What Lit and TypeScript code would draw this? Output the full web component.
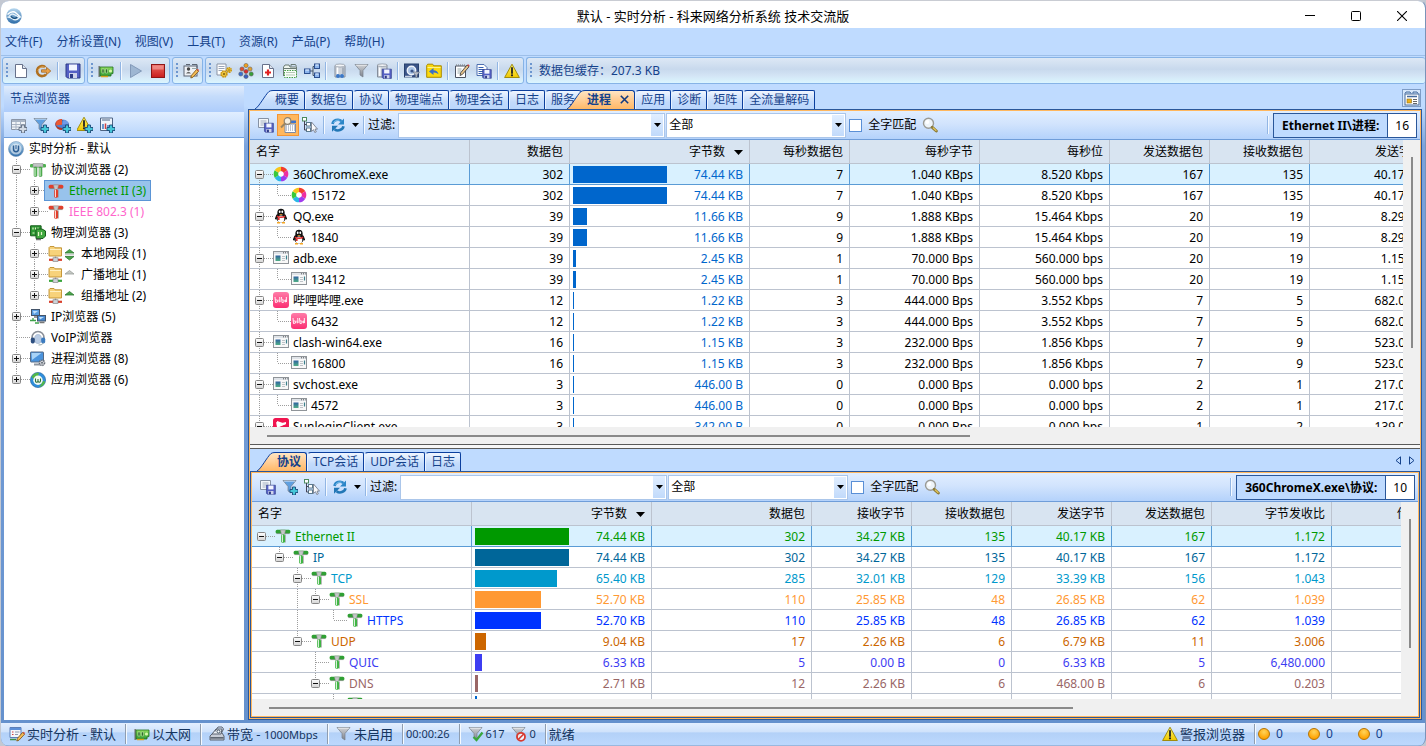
import { LitElement, html, svg, css, nothing } from "lit";
import { customElement, state } from "lit/decorators.js";
import { classMap } from "lit/directives/class-map.js";

const pipe = (arm: string, stem: string) => svg`
  <rect x=".6" y="1.800" width="14.800" height="3.600" rx="1.500" fill=${arm} />
  <path d="M1.500 5.600h13" stroke="#6d756d" stroke-width=".6" />
  <path d="M5.500 2h5l-1 4.500h-3z" fill="#c4c7c7" stroke="#8b8f8f" stroke-width=".5" />
  <rect x="6.200" y="6.200" width="3.800" height="8.600" rx="1.500" fill=${stem} />
  <path d="M7.500 6.600v7.500" stroke="#fff" stroke-opacity=".8" stroke-width="1" />
  <path d="M10.500 6.500v8" stroke="#999" stroke-width=".7" />`;

const funnel = (fill: string) => svg`
  <path d="M1 1.500h13l-5 6v6.500l-3-2V7.500z" fill=${fill} stroke="#777f8a" stroke-width=".7" />
  <path d="M2 2.200h11" stroke="#fff" stroke-opacity=".6" />`;

const plus = svg`<path d="M10.500 8h3v2.500H16v3h-2.500V16h-3v-2.500H8v-3h2.500z" fill="#46c7d8" stroke="#184a78" stroke-width=".9" />`;
const floppy = (x: number, y: number, s: number) => svg`
  <g transform=${`translate(${x} ${y}) scale(${s})`}>
    <path d="M1 1h14v14H2.500L1 13.500z" fill="#5560c4" stroke="#2c3a86" />
    <rect x="4" y="1.500" width="8" height="6" fill="#f2f5ff" />
    <rect x="4" y="10" width="8" height="5" fill="#cfd4ea" /><rect x="5" y="11" width="3" height="4" fill="#2c3a86" />
  </g>`;
const warn = svg`
  <path d="M8 1.200 15.400 14.500H.6z" fill="url(#g-yellow)" stroke="#9a8500" stroke-width=".9" stroke-linejoin="round" />
  <path d="M8 5v5" stroke="#222" stroke-width="1.800" stroke-linecap="round" /><circle cx="8" cy="12.300" r="1.100" fill="#222" />`;
const nic = svg`
  <path d="M1.200 3v11" stroke="#777" stroke-width="1.500" />
  <path d="M2 4h13v6.500l-2 .5v2H2z" fill="url(#g-green)" stroke="#1e6e1e" stroke-width=".8" />
  <path d="M4 6h2v4H4zM7.500 6h2v4h-2z" fill="#2b6a2b" stroke="#c8efae" stroke-width=".5" /><circle cx="12.500" cy="8" r="1.600" fill="#d6f7a8" />
  <path d="M3 13.500h7" stroke="#d6a520" stroke-width="1.500" />`;
const pencil = svg`
  <path d="M13.500 6.500 15.500 8.300 10 14.200 7.800 15 8.300 12.500z" fill="#f3bd57" stroke="#7a4e12" stroke-width=".8" />
  <path d="M13.500 6.500l2 1.800 .6-1.200-1.400-1.300z" fill="#d8574a" />`;
const page = svg`<path d="M2.500 1.500h7l4 4v9h-11z" fill="#fff" stroke="#67718a" /><path d="M9.500 1.500v4h4" fill="#dfe5ee" stroke="#67718a" />`;
const netFolder = (net: string) => svg`
  <path d="M1 1.500l1-1h4l1 1.300h6.500V10H1z" fill="#f7d27a" stroke="#c08f2c" stroke-width=".9" />
  <path d="M2 3.500h11" stroke="#fff0c0" />
  <path d="M7.500 10.500v2" stroke="#999" stroke-width="1.500" />
  <path d="M1 13.800h13" stroke=${net} stroke-width="2.200" /><rect x="5" y="11.800" width="5" height="3.500" fill="#cfd2d8" stroke="#777" stroke-width=".6" />`;
const appWindow = svg`
  <rect x=".5" y="1.500" width="15" height="12" fill="#f8f8f8" stroke="#8f9499" />
  <path d="M1 2h14v2H1z" fill="#dfe3e8" /><path d="M10 2.800h1m1 0h1m1 0h.7" stroke="#555" />
  <rect x="2.500" y="5.500" width="5" height="5.500" fill="url(#g-app)" />
  <path d="M9 6.500h3M9 8.500h3M9 10.500h3" stroke="#bfc4c9" /><path d="M13.500 5.500v4" stroke="#3b7f8b" stroke-width="1.200" />`;

const ICONS: Record<string, unknown> = {
  logo: svg`<circle cx="8" cy="8" r="7.700" fill="url(#g-logo)" />
    <path d="M1.500 6.500q5-4.500 8.500-1.500t4.500 4.500" fill="none" stroke="#fff" stroke-width="1.500" />
    <path d="M3 8.500q2.500-4 6-1.500t4.500 1.700M14 9q-4 4.500-7.500 1.800T1.500 9.500" fill="none" stroke="#e8f3fb" stroke-width="1.300" />
    <path d="M5 8.500q3.500 3.500 6 .5" fill="none" stroke="#1b4f7d" stroke-width="1.200" />`,
  newdoc: page,
  open: svg`<path d="M10.300 4.300A5 5 0 1 0 11 11.200" fill="none" stroke="#b0701f" stroke-width="2.600" /><path d="M10 4.500A4.700 4.700 0 0 0 3 8" fill="none" stroke="#e3b169" stroke-width="1" />
    <path d="M6.500 6.800h5V4.300l4.300 3.700-4.300 3.700V9.200h-5z" fill="#e9a24a" stroke="#9c5d14" stroke-width=".7" />`,
  save: floppy(0, 0, 1),
  nic,
  play: svg`<path d="M2.500 1.500 13.500 8 2.500 14.500z" fill="#9eb6d2" stroke="#8299b8" />`,
  stop: svg`<rect x="1.500" y="1.500" width="13" height="13" fill="url(#g-red)" stroke="#8e1616" /><path d="M2.500 2.500h11v4h-11z" fill="#f5a5a0" fill-opacity=".6" />`,
  profile: svg`<rect x="1" y="3" width="13" height="10" fill="#eef1f5" stroke="#5d6572" /><path d="M3 1.500h4M9 1.500h5v4" stroke="#5d6572" fill="none" />
    <circle cx="5.500" cy="6" r="1.700" fill="#444" /><path d="M3 10.500q2.500-3.500 5 0z" fill="#666" /><path d="M9 5.500h4" stroke="#9aa" />${pencil}`,
  gears: svg`<path d="M1 1h9v11H1z" fill="#fff" stroke="#8993a5" /><path d="M2.500 3.500h6M2.500 5.500h6M2.500 7.500h4" stroke="#9aa5b8" />
    <circle cx="8" cy="11" r="2.800" fill="#f4cf4a" stroke="#c8940f" stroke-width="1.800" stroke-dasharray="1.600 .6" /><circle cx="8" cy="11" r="1" fill="#7a5a08" />
    <circle cx="13" cy="7" r="2.200" fill="#f4cf4a" stroke="#c8940f" stroke-width="1.600" stroke-dasharray="1.300 .5" /><circle cx="13" cy="7" r=".8" fill="#7a5a08" />`,
  molecules: svg`<g stroke="#555" stroke-width=".5"><circle cx="8" cy="2.500" r="2.100" fill="#f0a020" /><circle cx="4" cy="6" r="2.100" fill="#e05030" /><circle cx="12" cy="6" r="2.100" fill="#e0a030" />
    <circle cx="8" cy="8.500" r="2.100" fill="#d83030" /><circle cx="2.800" cy="11" r="2.100" fill="#3a6fd0" /><circle cx="13.200" cy="11" r="2.100" fill="#38a038" /><circle cx="8" cy="13.500" r="2.100" fill="#3a5fc0" /></g>`,
  medic: svg`${page}<path d="M8 6.500v6M5 9.500h6" stroke="#e02020" stroke-width="2.200" />`,
  tabs: svg`<path d="M1.500 13V4l1.500-2h4l1 2h6.500v9" fill="#eef5ee" stroke="#6b7a74" /><path d="M9 3.500V1.500h4.500l1 2" fill="none" stroke="#6b7a74" />
    <path d="M2 5.500h12" stroke="#6b7a74" /><rect x="2.500" y="7.500" width="12" height="7" fill="#f8fff8" stroke="#4aa04a" stroke-dasharray="1.500 1" /><path d="M4 9.500h9M4 12h9" stroke="#b5c7b5" />`,
  matrix: svg`<path d="M6 8h3M9 3.500v9M9 3.500h2M9 12.500h2" stroke="#456" fill="none" /><rect x=".5" y="6" width="5.500" height="4.500" fill="#8db6ee" stroke="#2c4f8f" />
    <rect x="10.500" y="1" width="5" height="4.500" fill="#8db6ee" stroke="#2c4f8f" /><rect x="10.500" y="10" width="5" height="4.500" fill="#8db6ee" stroke="#2c4f8f" /><path d="M1.500 7h3.500M11.500 2h3M11.500 11h3" stroke="#e9f3ff" />`,
  buffer: svg`<path d="M3 2.500h10v11.500H3z" fill="#ccd2da" stroke="#858e9b" /><ellipse cx="8" cy="2.500" rx="5" ry="1.500" fill="#f3f5f8" stroke="#858e9b" stroke-width=".7" />
    <circle cx="6" cy="13" r="2" fill="#3a78c8" /><circle cx="10" cy="13" r="2" fill="#3a78c8" /><path d="M5.500 4.500v6.500" stroke="#fff" stroke-width="1.500" /><path d="M11 4.500v6.500" stroke="#9aa3b0" stroke-width="1.500" />`,
  filterGrey: funnel("url(#g-grey)"),
  bufferSave: svg`<path d="M1.500 2h9.500v12H1.500z" fill="#ccd2da" stroke="#858e9b" /><ellipse cx="6.300" cy="2.200" rx="4.800" ry="1.300" fill="#f3f5f8" stroke="#858e9b" stroke-width=".7" /><path d="M3.800 4.500V13" stroke="#fff" stroke-width="1.500" />${floppy(5.500, 5.500, 0.66)}`,
  searchPane: svg`<rect x=".5" y="1" width="14" height="13" fill="#3a5488" stroke="#27406e" /><path d="M1 13.500h7" stroke="#c8d2e4" stroke-width="1.500" />
    <circle cx="7.500" cy="7.500" r="4.200" fill="#a9c3e6" stroke="#eef3fa" stroke-width="1.500" /><circle cx="8" cy="8" r="1.600" fill="#3a5488" /><path d="M9 9h6.500l-2.500 3v3l-1.500-1v-2z" fill="#b9bec8" stroke="#666f80" stroke-width=".6" />`,
  folderBack: svg`<path d="M.7 2.500l1-1.300h5l1 1.600h7.600v11.500H.7z" fill="#fbd90f" stroke="#a98a00" /><path d="M1.500 4.500h13" stroke="#fff38a" />
    <path d="M3 8.500 7.500 5v2.200q4 0 5 4-2-1.800-5-1.700V12z" fill="#3a6fc8" />`,
  note: svg`<path d="M1.500 3h10v11.500h-10z" fill="#fff" stroke="#4a5261" /><path d="M2 2h9" stroke="#777" stroke-dasharray="1 1" /><path d="M3.500 6h4M3.500 8h4M3.500 10h3" stroke="#9aa" />
    <path d="M13 2l2 1.800-6.500 7.500L6 12.500l.7-2.700z" fill="#e8c48a" stroke="#333" stroke-width=".8" /><path d="M13 2l2 1.800.6-1.300-1.400-1.300z" fill="#d04040" />`,
  reportSave: svg`<path d="M1 1.500h7l3 3v8H1z" fill="#fff" stroke="#4d6fb0" /><path d="M2.500 4.500h5M2.500 6.500h6M2.500 8.500h6M2.500 10.500h4" stroke="#3460b0" />${floppy(6, 6, 0.62)}`,
  warn,
  tablePlus: svg`<path d="M.5 2.500h14v10H.5z" fill="#f1f4f8" stroke="#8a95a6" /><path d="M1 3h13v2H1z" fill="#a9b5c6" /><path d="M1 7.500h13M1 10h13M5 5v8M9.500 5v8" stroke="#a8b3c3" />
    <path d="M10.500 8h3v2.500H16v3h-2.500V16h-3v-2.500H8v-3h2.500z" fill="#d3dbe6" stroke="#5d6b80" stroke-width=".9" />`,
  filterPlus: svg`${funnel("#5f9fe0")}${plus}`,
  piePlus: svg`<ellipse cx="7" cy="7.500" rx="6.500" ry="4.500" fill="#4f7fd0" stroke="#274a8c" stroke-width=".7" /><path d="M7 7.500V2a6 5 0 0 0-6.300 6.300z" fill="#e04a2a" /><path d="M.8 8.500q1 4.500 6.200 4.500v-2Q3 10.500.8 8.500z" fill="#b8341c" /><path d="M7 7.500V2.500L2 4.500l-1 4z" fill="#ea5a34" /><path d="M7 7.500 13.500 7Q13 3 8.500 3z" fill="#6f9be6" />${plus}`,
  warnPlus: svg`<g transform="translate(-1 -1)">${warn}</g>${plus}`,
  reportPlus: svg`<path d="M1.500 1h12v12.500h-12z" fill="#edf3fb" stroke="#4f6484" /><path d="M3 3h8" stroke="#4f6484" /><path d="M4 12V7M9 12V8" stroke="#3c78c0" stroke-width="1.500" /><path d="M6.500 12V6.500" stroke="#d04040" stroke-width="1.500" />${plus}`,
  listSave: svg`<path d="M.5 1.500h10v9H.5z" fill="#f3f6fa" stroke="#8692a5" /><path d="M2.500 4h6M2.500 6h6M2.500 8h3" stroke="#a6b1c1" />${floppy(5.800, 5.600, 0.64)}`,
  lookup: svg`<path d="M5 7h10.500v8.500H5z" fill="#fff" stroke="#7d8aa5" /><path d="M10 3.500h6v2.500h-6z" fill="#3b74d0" /><path d="M6 9h9M6 11h9M6 13h9" stroke="#7d8aa5" stroke-dasharray="1 1" />
    <circle cx="7.500" cy="4" r="3.300" fill="#f6efe2" stroke="#8e8372" stroke-width="1.200" /><path d="M5 6.500 1 10.500" stroke="#9c8560" stroke-width="2" />`,
  treePick: svg`<rect x=".5" y=".5" width="4" height="3.500" fill="#fff" stroke="#4c8a5e" /><rect x="4.500" y="5.500" width="4" height="3.500" fill="#fff" stroke="#5c7a8e" /><rect x="4.500" y="11" width="4" height="3.500" fill="#fff" stroke="#5c7a8e" />
    <path d="M2.500 4v9h2M2.500 7.500h2" fill="none" stroke="#445" /><path d="M9.500 5v9.500l2-1.800 1.300 2.800 1.500-.7-1.300-2.700H15.500z" fill="#f8f9fb" stroke="#6a7180" stroke-width=".8" />`,
  refresh: svg`<path d="M2.500 7A5.500 5 0 0 1 11.500 4" fill="none" stroke="#2b86c8" stroke-width="2.600" /><path d="M14 1.500v6H8z" fill="#2b86c8" />
    <path d="M13.500 9.200A5.500 5 0 0 1 4.500 12.200" fill="none" stroke="#2277b6" stroke-width="2.600" /><path d="M2 14.700v-6h6z" fill="#2277b6" />
    <path d="M3.500 5.500Q6 2.500 9.500 3" fill="none" stroke="#8ccaf0" stroke-width=".9" />`,
  search: svg`<circle cx="6.500" cy="6.300" r="5" fill="#eef4f8" stroke="#9b9b95" stroke-width="1.400" /><circle cx="5.300" cy="5" r="2" fill="#fff" /><path d="M10.300 10.300 14.300 14" stroke="#8a7a3a" stroke-width="3" stroke-linecap="round" /><path d="M11.300 11 14 13.500" stroke="#e3c65a" stroke-width="1.200" stroke-linecap="round" />`,
  panel: svg`<path d="M1 3.500 2 2h4l1 1.500M9 3.500V2h4l1 1.500" stroke="#456a9c" fill="#c7dcf3" /><rect x="1" y="4" width="14" height="11" fill="#fff" stroke="#456a9c" /><path d="M3 6.500h10" stroke="#456a9c" stroke-width="1.500" />
    <rect x="3" y="9" width="4.500" height="4" fill="#eeb21c" stroke="#8a6d1a" stroke-width=".6" /><path d="M9 9.500h4M9 11.500h4M9 13.500h4" stroke="#666" />`,
  session: svg`<circle cx="8" cy="8" r="7.500" fill="url(#g-logo)" stroke="#6d93bb" stroke-width=".6" /><circle cx="8" cy="8" r="5.600" fill="#fff" fill-opacity=".55" />
    <path d="M5.500 4.500v3.500q0 2.700 2.500 2.700t2.500-2.700V4.500" fill="none" stroke="#2d5f94" stroke-width="1.500" /><path d="M8 4v4" stroke="#2d5f94" />`,
  pipes: svg`<rect x="0" y="2" width="16" height="3.400" rx="1.200" fill="#4fb350" /><path d="M3 1.500h10v3.500H3z" fill="#c0c4c4" stroke="#888" stroke-width=".5" />
    <rect x="4" y="5" width="3" height="9.500" rx="1" fill="#54b554" stroke="#3c8a3c" stroke-width=".5" /><rect x="9" y="5" width="3" height="9.500" rx="1" fill="#54b554" stroke="#3c8a3c" stroke-width=".5" /><path d="M5 6v8M10 6v8" stroke="#d5f2d5" />`,
  pipeRed: pipe("#e0402c", "#e0402c"),
  pipeGreen: pipe("#2fa033", "#3fb443"),
  boards: svg`<path d="M.6.800h10.500v10H.6z" fill="#2f9a35" stroke="#145a18" /><path d="M6 4h6l3.500 2v5l-2.500 2.500H6z" fill="#41a940" stroke="#145a18" /><path d="M3 2.500v2M5.500 2.500v2M8 2.500v1M2.500 8h2M8.500 7v4M11.500 7v3" stroke="#e6f5c8" stroke-width="1.200" /><path d="M6 14.500h5" stroke="#777" stroke-width="1.300" />`,
  netRed: netFolder("#d8402c"),
  netGreen: netFolder("#38a53a"),
  computers: svg`<rect x="1.500" y=".5" width="8" height="6" fill="#5b9ee0" stroke="#44546a" /><path d="M3 2h5l-4 3z" fill="#bfe0fb" /><path d="M4 8h4" stroke="#777" stroke-width="1.500" />
    <rect x="7.500" y="6.500" width="8" height="5.500" fill="#4688d0" stroke="#44546a" /><path d="M9 8h5l-4 2.500z" fill="#bfe0fb" /><path d="M9.500 13.500h5" stroke="#777" stroke-width="1.500" /><path d="M0 11.500h6M3 9v2.500M5 14h4" stroke="#3fa24a" stroke-width="1.300" />`,
  headset: svg`<path d="M2 9.500V7.500a6 6 0 0 1 12 0v2" fill="none" stroke="#8a8f98" stroke-width="1.600" /><ellipse cx="8" cy="9" rx="3.500" ry="4.500" fill="#b9cce4" stroke="#8ba1bd" stroke-width=".5" />
    <rect x=".8" y="7.500" width="4" height="6" rx="1.800" fill="#2d4f80" /><rect x="11.200" y="7.500" width="4" height="6" rx="1.800" fill="#3b7bc0" /><path d="M13.500 13q-2 2.500-5 2" fill="none" stroke="#9aa" />`,
  monitor: svg`<rect x=".5" y="1" width="13" height="10" rx=".6" fill="#4a93dc" stroke="#566a85" /><path d="M1.500 2h10L2 9z" fill="#a8d3f7" /><path d="M4 13.500h6" stroke="#8d949e" stroke-width="2" /><circle cx="12" cy="11.800" r="2.600" fill="#d8dbe0" stroke="#666c76" stroke-width="1.500" stroke-dasharray="1.500 .7" /><circle cx="12" cy="11.800" r="1" fill="#666c76" />`,
  webapp: svg`<circle cx="8" cy="8" r="7.600" fill="#2f8edb" stroke="#1c5c98" stroke-width=".6" /><path d="M1.500 5q3-5 7.500-4l-1 3-4 3zM10 14l3-5 2.200.5q-1.500 5-6 5.500z" fill="#52b748" /><circle cx="8" cy="8.200" r="4.700" fill="#f4fbf4" />
    <path d="M5.500 6.500v2.300q.3 1.700 1.400 1.500 1.100-.2 1.100-1.500V7v1.800q.2 1.500 1.200 1.500t1.300-1.500V6.500" fill="none" stroke="#2a6f3a" stroke-width="1.100" />`,
  chrome360: svg`<g fill="none" stroke-width="4.600"><path d="M8 3a5 5 0 0 1 4.300 2.500" stroke="#f23d2e" /><path d="M12.300 5.500a5 5 0 0 1 0 5" stroke="#ee2fa0" /><path d="M12.300 10.500a5 5 0 0 1-4.300 2.500" stroke="#a03bee" />
    <path d="M8 13a5 5 0 0 1-4.300-2.500" stroke="#2bb7e8" /><path d="M3.700 10.500a5 5 0 0 1 0-5" stroke="#37c93b" /><path d="M3.700 5.500A5 5 0 0 1 8 3" stroke="#f7c61c" /></g><circle cx="8" cy="8" r="2.500" fill="#fff" />`,
  qq: svg`<ellipse cx="8" cy="9.500" rx="4.800" ry="5" fill="#111" /><ellipse cx="8" cy="5" rx="3.700" ry="4.300" fill="#111" /><ellipse cx="8" cy="11" rx="3.300" ry="3.500" fill="#fff" /><path d="M2.800 10.500 4 7.500M13.200 10.500 12 7.500" stroke="#111" stroke-width="1.700" stroke-linecap="round" />
    <ellipse cx="6.700" cy="3.800" rx=".9" ry="1.200" fill="#fff" /><ellipse cx="9.300" cy="3.800" rx=".9" ry="1.200" fill="#fff" /><path d="M6 6h4l-2 1z" fill="#f5a623" /><path d="M3.800 7.500q4 2 8.400 0v1.800q-4 1.500-8.400 0z" fill="#e02b2b" /><path d="M5 9.500h1.600V12H5z" fill="#e02b2b" /><path d="M4 14.800h3M9 14.800h3" stroke="#f5a623" stroke-width="1.600" />`,
  appWindow,
  bili: svg`<rect width="16" height="16" rx="3" fill="url(#g-pink)" /><path d="M2 5l.5 5.500 2-.5.300-1.700-2.300-.5M6 7.500l.3 2.800M6.700 5l.4 5M8.500 5l.5 5.500 2-.5.300-1.700-2.300-.5M12.400 7.500l.2 2.800M13.300 5l.2 5" fill="none" stroke="#fff" stroke-width=".9" />`,
  sunlogin: svg`<rect width="16" height="16" rx="2.500" fill="#f0144f" /><path d="M3 4l4 1.500 6-1.500v2L4 9z" fill="#fff" /><path d="M4 3v7l9-4z" fill="#fff" />`,
  checklist: svg`<path d="M1 1.500h11v10H1z" fill="#f4f7fb" stroke="#5c7fb8" /><path d="M1 2h11v2H1z" fill="#5c8fd8" /><path d="M3 6h1.500M3 8.500h1.500" stroke="#d04040" stroke-width="1.200" /><path d="M6 6h4.500M6 8.500h3" stroke="#8c9ab0" /><path d="M1 13.500h6" stroke="#3f8f46" stroke-width="1.300" />${pencil}`,
  meter: svg`<path d="M1 10l3-3h9l2 3v4H1z" fill="#c8cdd6" stroke="#5b6370" /><path d="M3 8l4-5h6l-1 5z" fill="#eef1f5" stroke="#5b6370" /><path d="M6 5.500 9 1l4 0 1.500 2-2 4" fill="none" stroke="#5b6370" /><circle cx="9.500" cy="5.500" r="1.500" fill="#fff" stroke="#456" /><path d="M1.500 11.800h13" stroke="#3c4450" stroke-width="1.300" />`,
  filterOk: svg`${funnel("url(#g-grey)")}<path d="M5.500 11l3 3 6-7.500" fill="none" stroke="#39a63c" stroke-width="2.300" />`,
  filterNo: svg`${funnel("url(#g-grey)")}<circle cx="10" cy="10.800" r="4" fill="#fff" fill-opacity=".8" stroke="#d83a30" stroke-width="1.800" /><path d="M7.300 13.500l5.500-5.500" stroke="#d83a30" stroke-width="1.700" />`,
};

const icon = (name: string) =>
  html`<svg class="icon" viewBox="0 0 16 16" aria-hidden="true">${ICONS[name]}</svg>`;

/* Guide cells of a tree row: " " blank, "v" through line, "t" branch, "l" last branch,
   and an expander "-" or "+", followed by its lines: "u" up, "d" down. */
const guide = (g: string) => {
  const k = g[0];
  const box = k === "-" || k === "+";
  const up = g.includes("u") || "vtl".includes(k);
  const down = g.includes("d") || k === "v" || k === "t";
  return html`<svg class="guide" viewBox="0 0 18 21" aria-hidden="true">
    ${up ? svg`<path class="dots" d="M9.500 0v10" />` : nothing}
    ${down ? svg`<path class="dots" d="M9.500 10v11" />` : nothing}
    ${box || k === "t" || k === "l" ? svg`<path class="dots" d="M10 10.500h13" />` : nothing}
    ${box
      ? svg`<rect x="5.500" y="6.500" width="8" height="8" rx="1" fill="url(#g-box)" stroke="#868686" />
          <path d=${k === "+" ? "M7 10.500h5M9.500 8v5" : "M7 10.500h5"} stroke="#111" />`
      : nothing}
  </svg>`;
};

interface Node { g: string[]; icon: string; text: string; cls?: string; arrow?: string; }
const TREE: Node[] = [
  { g: [], icon: "session", text: "实时分析 - 默认" },
  { g: ["-ud"], icon: "pipes", text: "协议浏览器 (2)" },
  { g: ["v", "+ud"], icon: "pipeRed", text: "Ethernet II (3)", cls: "picked" },
  { g: ["v", "+u"], icon: "pipeRed", text: "IEEE 802.3 (1)", cls: "pink" },
  { g: ["-ud"], icon: "boards", text: "物理浏览器 (3)" },
  { g: ["v", "+ud"], icon: "netRed", text: "本地网段 (1)", arrow: "both" },
  { g: ["v", "+ud"], icon: "netGreen", text: "广播地址 (1)", arrow: "idle" },
  { g: ["v", "+u"], icon: "netRed", text: "组播地址 (2)", arrow: "up" },
  { g: ["+ud"], icon: "computers", text: "IP浏览器 (5)" },
  { g: ["t"], icon: "headset", text: "VoIP浏览器" },
  { g: ["+ud"], icon: "monitor", text: "进程浏览器 (8)" },
  { g: ["+u"], icon: "webapp", text: "应用浏览器 (6)" },
];

interface Col { title: string; width: number; sort?: boolean; }
interface Row { g: string[]; icon: string; name: string; cells: string[]; bar: number; color: string; tint?: boolean; }

const TOP_COLS: Col[] = [
  { title: "名字", width: 220 }, { title: "数据包", width: 100 }, { title: "字节数", width: 180, sort: true },
  { title: "每秒数据包", width: 100 }, { title: "每秒字节", width: 130 }, { title: "每秒位", width: 130 },
  { title: "发送数据包", width: 100 }, { title: "接收数据包", width: 100 }, { title: "发送字节", width: 120 },
];
const proc = (name: string, pid: string, ic: string, bar: number, cells: string[], first = false): Row[] => [
  { g: [first ? "-d" : "-ud"], icon: ic, name, cells, bar, color: "#0066cc" },
  { g: ["v", "l"], icon: ic, name: pid, cells, bar, color: "#0066cc" },
];
const TOP_ROWS: Row[] = [
  ...proc("360ChromeX.exe", "15172", "chrome360", 74.44, ["302", "74.44 KB", "7", "1.040 KBps", "8.520 Kbps", "167", "135", "40.17 KB"], true),
  ...proc("QQ.exe", "1840", "qq", 11.66, ["39", "11.66 KB", "9", "1.888 KBps", "15.464 Kbps", "20", "19", "8.29 KB"]),
  ...proc("adb.exe", "13412", "appWindow", 2.45, ["39", "2.45 KB", "1", "70.000 Bps", "560.000 bps", "20", "19", "1.15 KB"]),
  ...proc("哔哩哔哩.exe", "6432", "bili", 1.22, ["12", "1.22 KB", "3", "444.000 Bps", "3.552 Kbps", "7", "5", "682.00 B"]),
  ...proc("clash-win64.exe", "16800", "appWindow", 1.15, ["16", "1.15 KB", "3", "232.000 Bps", "1.856 Kbps", "7", "9", "523.00 B"]),
  ...proc("svchost.exe", "4572", "appWindow", 0.44, ["3", "446.00 B", "0", "0.000 Bps", "0.000 bps", "2", "1", "217.00 B"]),
  ...proc("SunloginClient.exe", "5120", "sunlogin", 0.34, ["3", "342.00 B", "0", "0.000 Bps", "0.000 bps", "1", "2", "139.00 B"]).slice(0, 1),
];

const LOW_COLS: Col[] = [
  { title: "名字", width: 220 }, { title: "字节数", width: 180, sort: true }, { title: "数据包", width: 160 },
  { title: "接收字节", width: 100 }, { title: "接收数据包", width: 100 }, { title: "发送字节", width: 100 },
  { title: "发送数据包", width: 100 }, { title: "字节发收比", width: 120 }, { title: "传输时长", width: 120 },
];
const low = (g: string[], name: string, color: string, bar: number, ...cells: string[]): Row =>
  ({ g, icon: "pipeGreen", name, color, bar, cells: [...cells, ""], tint: true });
const LOW_ROWS: Row[] = [
  low(["-"], "Ethernet II", "#009900", 74.44, "74.44 KB", "302", "34.27 KB", "135", "40.17 KB", "167", "1.172"),
  low([" ", "-u"], "IP", "#006699", 74.44, "74.44 KB", "302", "34.27 KB", "135", "40.17 KB", "167", "1.172"),
  low([" ", " ", "-ud"], "TCP", "#0099cc", 65.4, "65.40 KB", "285", "32.01 KB", "129", "33.39 KB", "156", "1.043"),
  low([" ", " ", "v", "-u"], "SSL", "#ff9933", 52.7, "52.70 KB", "110", "25.85 KB", "48", "26.85 KB", "62", "1.039"),
  low([" ", " ", "v", " ", "l"], "HTTPS", "#0033ff", 52.7, "52.70 KB", "110", "25.85 KB", "48", "26.85 KB", "62", "1.039"),
  low([" ", " ", "-u"], "UDP", "#cc6600", 9.04, "9.04 KB", "17", "2.26 KB", "6", "6.79 KB", "11", "3.006"),
  low([" ", " ", " ", "t"], "QUIC", "#3d3df2", 6.33, "6.33 KB", "5", "0.00 B", "0", "6.33 KB", "5", "6,480.000"),
  low([" ", " ", " ", "-u"], "DNS", "#996666", 2.71, "2.71 KB", "12", "2.26 KB", "6", "468.00 B", "6", "0.203"),
  low([" ", " ", " ", " ", "l"], "", "#0066cc", 1.6, "", "", "", "", "", "", ""),
];

const TOOL_GROUPS: string[][] = [
  ["newdoc", "open", "|", "save"],
  ["nic", "|", "play", "stop"],
  ["profile"],
  ["gears", "molecules", "medic", "tabs", "matrix", "|", "buffer", "filterGrey", "bufferSave", "|", "searchPane", "folderBack", "|", "note", "reportSave", "|", "warn"],
];

@customElement("app-root")
export class AppRoot extends LitElement {
  @state() private topTab = "进程";
  @state() private lowTab = "协议";

  static styles = css`
    :host {
      display: block;
      height: 100vh;
      overflow: hidden;
      background: #c3c8d2;
      color: #000;
      font: 12px/20px "Noto Sans", "Noto Sans CJK SC", sans-serif;
    }
    * { box-sizing: border-box; }
    button, input, select { font: inherit; color: inherit; margin: 0; padding: 0; border: 0; background: none; border-radius: 0; }
    svg { display: block; }
    .defs { position: absolute; }
    .icon { width: 16px; height: 16px; flex: none; }
    .window {
      height: 100%;
      margin-left: 1px;
      display: flex;
      flex-direction: column;
      background: #6591cd;
      border-top: 1px solid #c9ccd3;
      border-right: 1px solid #7a93b8;
      border-radius: 8px;
      overflow: hidden;
    }
    .titlebar { display: flex; align-items: center; height: 27px; flex: none; background: #fff; padding: 2px 6px 0 5px; }
    .titlebar h1 { flex: 1; margin: 0; text-align: center; font-size: 13px; font-weight: 400; padding-left: 99px; }
    .caption { display: flex; gap: 36px; padding-right: 12px; }
    .caption button { width: 10px; height: 20px; display: grid; place-items: center; }
    .menu { display: flex; gap: 14px; height: 27px; padding: 0 4px; background: #bfdbff; color: #15428b; flex: none; }
    .toolrow { display: flex; gap: 2px; height: 31px; padding: 1px 0 2px 1px; background: #bfdbff; border-top: 1px solid #9dbfe9; flex: none; }
    .group {
      display: flex;
      align-items: center;
      border: 1px solid #86b3e6;
      border-radius: 3px;
      background: linear-gradient(#dde8f5, #c8d9ed 45%, #d3e4f5 70%, #dbf6ff);
      color: #15428b;
    }
    .group.wide { flex: 1; border-right: 0; }
    .grip { width: 7px; height: 15px; flex: none; background: radial-gradient(circle at 1px 1px, #6d96cf 1px, transparent 1px) 3px 0 / 8px 4px repeat-y; }
    .group.wide .grip { margin-right: 5px; }
    .tool { width: 22px; height: 22px; display: grid; place-items: center; flex: none; }
    .tool.on { background: #ffb75e; border: 1px solid #f29536; }
    .sep { width: 2px; height: 18px; margin: 0 2px; border-left: 1px solid #92b6e4; border-right: 1px solid #f4f9ff; flex: none; }
    .short .sep { margin: 0 3px; }
    .body { flex: 1; min-height: 0; display: flex; gap: 4px; padding: 0 3px 3px; background: linear-gradient(#bfdbff 0, #bfdbff 20px, #7ba3dc 60px, #6591cd); }
    .side { width: 240px; flex: none; display: flex; flex-direction: column; background: #fff; }
    .side h2 { margin: 0; height: 26px; padding: 3px 6px; font-size: 12px; font-weight: 400; color: #15428b; background: linear-gradient(#e0ecfc, #c5dcfb 40%, #aecdfb); flex: none; }
    .sidetools { display: flex; align-items: center; height: 26px; padding: 0 4px; background: linear-gradient(#e1eeff, #b8d5fc); border-bottom: 1px solid #6f9dd9; flex: none; }
    .tree { list-style: none; margin: 0; padding: 0 3px; }
    .tree li { display: flex; height: 21px; align-items: center; }
    .root { padding-left: 1px; }
    .node { display: flex; align-items: center; gap: 5px; height: 21px; padding-right: 4px; border: 1px solid transparent; margin-left: 1px; padding-left: 3px; }
    .root .node { margin-left: -4px; }
    .picked .node { background: #98c3ec; border-color: #5b95d6; color: #009900; }
    .pink { color: #ff66cc; }
    .guide { width: 18px; height: 21px; overflow: visible; flex: none; }
    .dots { stroke: #9d9d9d; stroke-dasharray: 1 1; fill: none; }
    .dir { width: 11px; height: 16px; margin: 0 1px 0 -5px; }
    .main { flex: 1; min-width: 0; display: flex; flex-direction: column; }
    .tabs { display: flex; align-items: flex-end; height: 23px; padding-left: 7px; background: #bfdbff; color: #15428b; flex: none; }
    .tab { display: flex; height: 19px; position: relative; white-space: nowrap; }
    .tab .face {
      height: 19px;
      padding: 0 5px 1px;
      border: 1px solid #0b3f9e;
      border-bottom: 0;
      border-left-color: #e8f2ff;
      border-radius: 4px 2px 0 0;
      background: linear-gradient(#f0f6ff, #c3dbfb 60%, #bad6fc);
      display: flex;
      align-items: center;
      gap: 9px;
    }
    .slant { width: 18px; height: 19px; }
    .tab.lean .face { border-left: 0; border-radius: 0 3px 0 0; padding-left: 2px; }
    .tab.active { z-index: 1; font-weight: 700; }
    .tab.active .face { background: linear-gradient(#ffe6c4, #ffd09a 40%, #ffb866); }
    .tab.over { margin-left: -14px; }
    .grow { flex: 1; }
    .tabtool { display: flex; align-self: center; gap: 8px; padding-right: 5px; }
    .tabtool button { height: 18px; display: grid; place-items: center; }
    .tabtool.framed { padding: 0 1px 0 0; }
    .tabtool.framed button { width: 19px; border: 1px solid #7d9cc6; background: #d8e8fb; }
    .frame { border: 1px solid #2a579a; flex: 1; min-height: 0; display: flex; }
    .glow { border: 1px solid #ffb75e; flex: 1; min-width: 0; min-height: 0; display: flex; flex-direction: column; background: #bfdbff; }
    .pane { display: flex; flex-direction: column; min-height: 0; min-width: 0; }
    .upper { flex: 333 1 0; }
    .lower { flex: 269 1 0; }
    .lower .tabs { height: 22px; }
    .splitter { height: 5px; background: #f7f7f7; border: solid #5a5a5a; border-width: 1px 0; flex: none; }
    .filter { display: flex; align-items: center; height: 29px; padding: 0 3px 0 5px; background: linear-gradient(#e1eeff, #d2e4fd 45%, #b4d2fb); border-bottom: 1px solid #6f9dd9; flex: none; }
    .drop { width: 12px; height: 22px; display: grid; place-items: center; }
    .filter .caps { padding: 0 3px 0 1px; }
    .combo { display: flex; align-items: center; width: 267px; height: 25px; background: #fff; border: 1px solid #abc6ea; padding-right: 1px; }
    .combo input { flex: 1; min-width: 0; height: 22px; padding: 0 2px; outline: 0; }
    .combo .drop { background: linear-gradient(#e1eeff, #c1dafb); }
    .pick { position: relative; display: block; width: 180px; height: 25px; margin-left: 1px; }
    .pick select { appearance: none; width: 100%; height: 25px; padding: 0 2px; background: #fff; border: 1px solid #abc6ea; }
    .pick .drop { position: absolute; right: 2px; top: 2px; height: 21px; background: linear-gradient(#e1eeff, #c1dafb); pointer-events: none; }
    .whole { display: flex; align-items: center; gap: 6px; margin: 0 3px 0 3px; }
    .whole input { appearance: none; width: 13px; height: 13px; background: #fff; border: 1px solid #5a8fd6; }
    .total { display: flex; height: 25px; line-height: 23px; border: 1px solid #2a579a; margin-left: 2px; white-space: nowrap; }
    .total b { padding: 0 8px; background: #bfdbff; border-right: 1px solid #2a579a; }
    .total span { padding: 0 7px; background: #fff; }
    .gridrow { flex: 1; min-height: 0; display: flex; background: #f0f0f0; }
    .clip { flex: 1; min-width: 0; overflow: hidden; background: #fff; }
    table { table-layout: fixed; border-spacing: 0; white-space: nowrap; }
    th { height: 24px; padding: 1px 6px 0; font-weight: 400; text-align: right; background: #d8e4f1; border: solid #bcc3cf; border-width: 0 1px 1px 0; }
    th:first-child { text-align: left; }
    th .sorted { display: inline-flex; align-items: center; gap: 9px; }
    td { height: 21px; padding: 2px 6px 0; text-align: right; border: solid #bcc3cf; border-width: 0 1px 1px 0; line-height: 18px; overflow: hidden; }
    td:first-child { padding: 0; }
    .sel td { background: #d9f1ff; border-color: #5a9bd5; }
    .name { display: flex; align-items: flex-start; height: 20px; }
    .name .icon { margin: 2px 4px 0 5px; }
    .name span { padding-top: 2px; }
    .barcell { display: flex; align-items: flex-start; justify-content: space-between; height: 18px; margin-left: -3px; }
    .bar { height: 17px; min-width: 1px; }
    .vbar { width: 17px; flex: none; padding: 17px 7px 79px 8px; display: flex; }
    .vbar i, .hbar i { background: #8a8a8a; flex: 1; }
    .hbar { height: 17px; flex: none; display: flex; padding: 8px 0 7px 17px; background: #f0f0f0; }
    .hbar i { flex: 0 0 61%; }
    .lower .hbar i { flex-basis: 70%; }
    .lower .vbar { padding-bottom: 51px; }
    .status {
      display: flex;
      align-items: center;
      height: 23px;
      flex: none;
      padding-left: 8px;
      color: #15355f;
      font-size: 13px;
      background: linear-gradient(#e3efff, #cfe2fb 40%, #b3d1f8 45%, #bcd8fd);
      border-bottom: 1px solid #9ab8de;
      white-space: nowrap;
    }
    .status .item { display: flex; align-items: center; gap: 2px; padding: 0 9px 0 0; }
    .status .item + .item { padding-left: 8px; border-left: 1px solid #8f9db0; box-shadow: inset 1px 0 #f5faff; }
    .status .item + .item.tight { padding-left: 3px; }
    .status .num { font-size: 11px; }
    .status .num + .icon { margin-left: 5px; }
    .status .balls { display: flex; gap: 25px; width: 171px; font-size: 12px; padding: 0 0 0 3px; border-left: 1px solid #8f9db0; box-shadow: inset 1px 0 #f5faff; }
    .ball { display: flex; align-items: center; gap: 6px; color: #15428b; }
    .ball i { width: 12px; height: 12px; border-radius: 50%; border: 1px solid #b77400; background: radial-gradient(circle at 50% 30%, #ffd45a, #ffa200 75%); }
  `;

  private arrow(kind: string) {
    const up = kind === "idle" ? "#c4c8c4" : "#4aa54c";
    const edge = kind === "idle" ? "#9a9f9a" : "#2d7a30";
    return html`<svg class="dir" viewBox="0 0 11 16" aria-hidden="true">
      <path d="M1 7 5.500 3.500 10 7z" fill=${up} stroke=${edge} stroke-width=".8" />
      ${kind === "both" ? svg`<path d="M1 10.500h9L5.500 14z" fill=${up} stroke=${edge} stroke-width=".8" /><path d="M1 8.800h9" stroke="#999" stroke-width=".7" />` : nothing}
    </svg>`;
  }

  private down() {
    return html`<svg width="7" height="4" viewBox="0 0 7 4" aria-hidden="true"><path d="M0 0h7L3.500 4z" /></svg>`;
  }

  private tab(label: string, active: boolean, first: boolean, closable: boolean, pick: () => void) {
    const lean = first || active;
    return html`<button role="tab" aria-selected=${active} class=${classMap({ tab: true, lean, active, over: active && !first })} @click=${pick}>
      ${lean
        ? html`<svg class="slant" viewBox="0 0 18 19" aria-hidden="true">
            <path d="M0 19C4 17 10 5 14 1.500Q15.500.5 18 .5V19z" fill=${active ? "url(#g-tabon)" : "url(#g-tab)"} />
            <path d="M0 19C4 17 10 5 14 1.500Q15.500.5 18 .5" fill="none" stroke="#0b3f9e" />
          </svg>`
        : nothing}
      <span class="face">${label}${closable && active
        ? html`<svg width="9" height="9" viewBox="0 0 9 9" aria-hidden="true"><path d="M.8.8l7.400 7.400M8.200.8.8 8.200" stroke="#123a80" stroke-width="1.600" /></svg>`
        : nothing}</span>
    </button>`;
  }

  private filterBar(second: string, name: string, label: string, count: string) {
    return html`<div class="filter">
      <button class="tool" aria-label="保存">${icon("listSave")}</button>
      <button class="tool ${second === "lookup" ? "on" : ""}" aria-label="过滤器">${icon(second)}</button>
      <button class="tool" aria-label="定位">${icon("treePick")}</button>
      <span class="sep"></span>
      <button class="tool" aria-label="刷新">${icon("refresh")}</button>
      <button class="drop" aria-label="刷新选项">${this.down()}</button>
      <span class="sep"></span>
      <label class="caps" for=${name}>过滤:</label>
      <span class="combo"><input id=${name} type="text" /><button class="drop" aria-label="历史">${this.down()}</button></span>
      <span class="pick"><select aria-label="字段"><option>全部</option></select><span class="drop">${this.down()}</span></span>
      <label class="whole"><input type="checkbox" />全字匹配</label>
      <button class="tool" aria-label="搜索">${icon("search")}</button>
      <span class="grow"></span><span class="sep"></span>
      <span class="total"><b>${label}</b><span>${count}</span></span>
    </div>`;
  }

  private grid(cols: Col[], rows: Row[]) {
    const barCol = cols.findIndex((c) => c.sort);
    const total = cols.reduce((n, c) => n + c.width, 0);
    return html`<div class="gridrow">
        <div class="clip">
          <table style="width:${total}px">
            <colgroup>${cols.map((c) => html`<col style="width:${c.width}px" />`)}</colgroup>
            <thead><tr>${cols.map((c) => html`<th scope="col">${c.sort
              ? html`<span class="sorted">${c.title}<svg width="9" height="5" viewBox="0 0 9 5" aria-hidden="true"><path d="M0 0h9L4.500 5z" /></svg></span>`
              : c.title}</th>`)}</tr></thead>
            <tbody>
              ${rows.map((r, i) => html`<tr class=${i === 0 ? "sel" : ""} style=${r.tint ? `color:${r.color}` : ""}>
                <td><div class="name">${r.g.map(guide)}${icon(r.icon)}<span>${r.name}</span></div></td>
                ${r.cells.map((c, k) => k + 1 === barCol
                  ? html`<td><div class="barcell"><span class="bar" style="width:${Math.floor((r.bar / 74.44) * 94)}px;background:${r.color}"></span><span style="color:${r.color}">${c}</span></div></td>`
                  : html`<td>${c}</td>`)}
              </tr>`)}
            </tbody>
          </table>
        </div>
        <div class="vbar"><i></i></div>
      </div>
      <div class="hbar"><i></i></div>`;
  }

  render() {
    const topTabs = ["概要", "数据包", "协议", "物理端点", "物理会话", "日志", "服务", "进程", "应用", "诊断", "矩阵", "全流量解码"];
    const lowTabs = ["协议", "TCP会话", "UDP会话", "日志"];
    const grad = (id: string, ...stops: string[]) => svg`<linearGradient id=${id} x1="0" y1="0" x2="0" y2="1">
      ${stops.map((c, i) => svg`<stop offset=${i / (stops.length - 1)} stop-color=${c} />`)}</linearGradient>`;
    return html`
      <svg class="defs" width="0" height="0" aria-hidden="true"><defs>
        ${grad("g-yellow", "#fff36a", "#f0c800")}${grad("g-green", "#8fdc5c", "#2f9a35")}${grad("g-red", "#ee6a62", "#c81c1c")}
        ${grad("g-grey", "#d0d2d6", "#7e838c")}${grad("g-logo", "#b5d6ee", "#2d6ca8")}${grad("g-app", "#2f62a0", "#4fae86")}
        ${grad("g-pink", "#ff7ca8", "#fb2e72")}${grad("g-box", "#ffffff", "#d4d4d4")}
        ${grad("g-tab", "#f0f6ff", "#c9dffc", "#bad6fc")}${grad("g-tabon", "#ffe6c4", "#ffd09a", "#ffb866")}
      </defs></svg>
      <div class="window">
        <header class="titlebar">
          ${icon("logo")}
          <h1>默认 - 实时分析 - 科来网络分析系统 技术交流版</h1>
          <div class="caption">
            <button aria-label="最小化"><svg width="10" height="10"><path d="M0 4.500h10" stroke="#000" /></svg></button>
            <button aria-label="最大化"><svg width="10" height="10"><rect x=".5" y=".5" width="9" height="9" rx="1" fill="none" stroke="#000" /></svg></button>
            <button aria-label="关闭"><svg width="10" height="10"><path d="M0 0l10 10M10 0 0 10" stroke="#000" stroke-width="1.100" /></svg></button>
          </div>
        </header>
        <nav class="menu">
          ${["文件(F)", "分析设置(N)", "视图(V)", "工具(T)", "资源(R)", "产品(P)", "帮助(H)"].map((m) => html`<button>${m}</button>`)}
        </nav>
        <div class="toolrow">
          ${TOOL_GROUPS.map((g) => html`<div class="group ${g.length < 5 ? "short" : ""}"><span class="grip"></span>
            ${g.map((t) => (t === "|" ? html`<span class="sep"></span>` : html`<button class="tool" aria-label=${t}>${icon(t)}</button>`))}</div>`)}
          <div class="group wide"><span class="grip"></span>数据包缓存：207.3 KB</div>
        </div>
        <div class="body">
          <aside class="side">
            <h2>节点浏览器</h2>
            <div class="sidetools">
              ${["tablePlus", "filterPlus", "piePlus", "warnPlus", "reportPlus"].map((t) => html`<button class="tool" aria-label=${t}>${icon(t)}</button>`)}
            </div>
            <ul class="tree">
              ${TREE.map((n) => html`<li class="${n.cls ?? ""} ${n.g.length ? "" : "root"}">
                ${n.g.map(guide)}<span class="node">${icon(n.icon)}${n.arrow ? this.arrow(n.arrow) : nothing}<span>${n.text}</span></span></li>`)}
            </ul>
          </aside>
          <main class="main">
            <div class="tabs" role="tablist">
              ${topTabs.map((t, i) => this.tab(t, t === this.topTab, i === 0, true, () => (this.topTab = t)))}
              <span class="grow"></span>
              <span class="tabtool framed"><button aria-label="面板">${icon("panel")}</button></span>
            </div>
            <div class="frame"><div class="glow">
              <section class="pane upper">
                ${this.filterBar("lookup", "filter-top", "Ethernet II\\进程:", "16")}
                ${this.grid(TOP_COLS, TOP_ROWS)}
              </section>
              <div class="splitter"></div>
              <section class="pane lower">
                <div class="tabs" role="tablist">
                  ${lowTabs.map((t, i) => this.tab(t, t === this.lowTab, i === 0, false, () => (this.lowTab = t)))}
                  <span class="grow"></span>
                  <span class="tabtool">
                    <button aria-label="向左"><svg width="6" height="9"><path d="M5.500.8v7.400L1 4.500z" fill="none" stroke="#15428b" /></svg></button>
                    <button aria-label="向右"><svg width="6" height="9"><path d="M.5.8v7.400L5 4.500z" fill="none" stroke="#15428b" /></svg></button>
                  </span>
                </div>
                <div class="frame"><div class="glow">
                  ${this.filterBar("filterPlus", "filter-low", "360ChromeX.exe\\协议:", "10")}
                  ${this.grid(LOW_COLS, LOW_ROWS)}
                </div></div>
              </section>
            </div></div>
          </main>
        </div>
        <footer class="status">
          <span class="item">${icon("checklist")}实时分析 - 默认</span>
          <span class="item">${icon("nic")}以太网</span>
          <span class="item">${icon("meter")}<span>带宽 - <span class="num">1000Mbps</span></span></span>
          <span class="item">${icon("filterGrey")}未启用</span>
          <span class="item tight num">00:00:26</span>
          <span class="item">${icon("filterOk")}<span class="num">617</span>${icon("filterNo")}<span class="num">0</span></span>
          <span class="item tight">就绪</span>
          <span class="grow"></span>
          <span class="item">${icon("warn")}警报浏览器</span>
          <span class="balls">${[0, 0, 0].map((n) => html`<span class="ball"><i></i>${n}</span>`)}
            <span class="grow"></span>
            <svg width="12" height="20" aria-hidden="true"><path d="M8 8h2M4 12h2M8 12h2M0 16h2M4 16h2M8 16h2" stroke="#4a6fa8" stroke-width="2" /></svg>
          </span>
        </footer>
      </div>`;
  }
}
